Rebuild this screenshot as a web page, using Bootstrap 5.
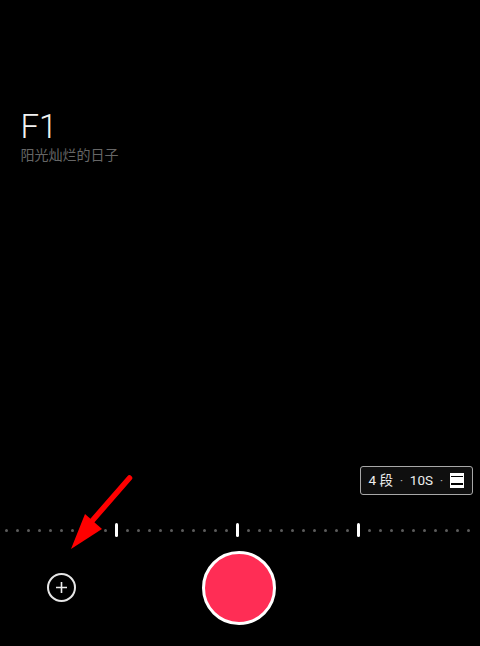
<!DOCTYPE html>
<html lang="zh">
<head>
<meta charset="utf-8">
<title>F1</title>
<link href="https://cdn.jsdelivr.net/npm/bootstrap@5.3.0/dist/css/bootstrap.min.css" rel="stylesheet">
<style>
html, body { height: 646px; margin: 0; background: #000; overflow: hidden; }
body { font-family: Roboto, "Noto Sans CJK SC", sans-serif; color: #fff; }
.screen { height: 646px; position: relative; }
.head-block { padding: 107px 0 0 20.5px; }
.title-f { font-size: 33px; line-height: 40px; font-weight: 300; color: #f2f2f2; }
.sub-f { font-size: 14px; line-height: 15px; color: #666; font-family: "Noto Sans CJK SC", sans-serif; }
.seg-row { padding-right: 7px; margin-bottom: 25px; }
.seg-pill { width: 113px; height: 29px; border: 1px solid #a8a8a8; border-radius: 3px; background: #0f0f0f; font-size: 13.5px; color: #eee; padding: 0 8px 0 7.5px; white-space: pre; }
.seg-pill .seg-sep { color: #aaa; }
.fill-ico { width: 14px; height: 15px; border: 1px solid #fff; background: linear-gradient(#fff 0 2px, #000 2px 3px, #fff 3px 9px, #000 9px 11px, #fff 11px); }
.tick-row { height: 20px; padding-left: 1px; }
.tick-cell { width: 11px; height: 20px; }
.tick-dot { width: 3px; height: 3px; border-radius: 50%; background: #5c5c5c; }
.tick-mark { width: 3px; height: 14px; border-radius: 2px; background: #fff; }
.ctrl-row { height: 74px; margin-top: 11px; margin-bottom: 21px; }
.add-btn { left: 47px; top: 22px; width: 29px; height: 29px; border: 2px solid #e6e6e6; border-radius: 50%; background: transparent; padding: 0; }
.rec-btn { width: 74px; height: 74px; border: 3px solid #fff; border-radius: 50%; background: #ff2d55; padding: 0; margin-right: 3px; }
.arrow-note { left: 0; top: 0; pointer-events: none; }
</style>
</head>
<body>
<div class="screen d-flex flex-column">
  <div class="head-block">
    <div class="title-f">F1</div>
    <div class="sub-f">阳光灿烂的日子</div>
  </div>
  <div class="mt-auto">
    <div class="seg-row d-flex justify-content-end">
      <div class="seg-pill d-flex align-items-center justify-content-between">
        <span>4 段</span><span class="seg-sep">·</span><span>10S</span><span class="seg-sep">·</span><span class="fill-ico d-block"></span>
      </div>
    </div>
    <div class="tick-row d-flex" id="ticks"></div>
    <div class="ctrl-row position-relative d-flex justify-content-center">
      <button class="add-btn position-absolute d-flex align-items-center justify-content-center" type="button" aria-label="add">
        <svg width="13" height="13" viewBox="0 0 13 13"><path d="M6.5 1v11M1 6.5h11" stroke="#eee" stroke-width="1.6" fill="none"/></svg>
      </button>
      <button class="rec-btn" type="button" aria-label="record"></button>
    </div>
  </div>
  <svg class="arrow-note position-absolute" width="480" height="646" viewBox="0 0 480 646">
    <path d="M129.500 478 L92 521" stroke="#ff0000" stroke-width="5.500" stroke-linecap="round" fill="none"/>
    <path d="M71 549 L85 514 L102 529 Z" fill="#ff0000"/>
  </svg>
</div>
<script>
var r = document.getElementById('ticks'), marks = {10:1, 21:1, 32:1};
for (var i = 0; i < 43; i++) {
  var c = document.createElement('div');
  c.className = 'tick-cell d-flex align-items-center justify-content-center';
  var d = document.createElement('div');
  d.className = marks[i] ? 'tick-mark' : 'tick-dot';
  c.appendChild(d); r.appendChild(c);
}
</script>
<script src="https://cdn.jsdelivr.net/npm/bootstrap@5.3.0/dist/js/bootstrap.bundle.min.js"></script>
</body>
</html>
